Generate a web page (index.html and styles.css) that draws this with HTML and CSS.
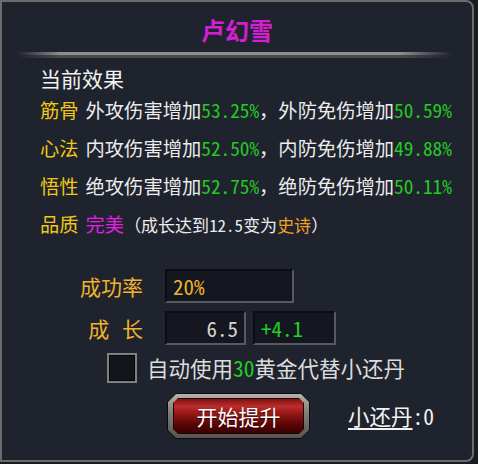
FILE: index.html
```html
<!DOCTYPE html>
<html lang="zh-CN">
<head>
    <meta charset="UTF-8">
    <meta name="viewport" content="width=device-width, initial-scale=1.0">
    <title>提升</title>
    <link rel="stylesheet" href="styles.css">
</head>
<body>
    <div class="panel">
        <h1 class="title">卢幻雪</h1>
        <div class="sep"></div>

        <div class="effects">
            <div class="head">当前效果</div>
            <div class="row"><span class="lbl">筋骨</span>外攻伤害增加<span class="num">53.25%</span>，外防免伤增加<span class="num">50.59%</span></div>
            <div class="row"><span class="lbl">心法</span>内攻伤害增加<span class="num">52.50%</span>，内防免伤增加<span class="num">49.88%</span></div>
            <div class="row"><span class="lbl">悟性</span>绝攻伤害增加<span class="num">52.75%</span>，绝防免伤增加<span class="num">50.11%</span></div>
            <div class="row"><span class="lbl">品质</span><span class="perfect">完美</span><span class="note">（成长达到<span class="half">12.5</span>变为<span class="epic">史诗</span>）</span></div>
        </div>

        <div class="form">
            <div class="frow">
                <span class="flabel">成功率</span>
                <div class="box rate">20%</div>
            </div>
            <div class="frow">
                <span class="flabel spaced">成 长</span>
                <div class="box cur">6.5</div>
                <div class="box add">+4.1</div>
            </div>
        </div>

        <label class="auto">
            <span class="check"></span>
            <span>自动使用<span class="gold">30</span>黄金代替小还丹</span>
        </label>

        <div class="actions">
            <button type="button" class="start">
                <span class="start-frame"><span class="start-face">开始提升</span></span>
            </button>
            <span class="pill"><u>小还丹</u><span class="half">:0</span></span>
        </div>
    </div>
</body>
</html>
```

FILE: styles.css
```css
/* General */
body {
    margin: 0;
    background-color: #181b22;
    font-family: "Noto Sans CJK SC", "Noto Sans", sans-serif;
    color: #ececec;
}

.panel {
    box-sizing: border-box;
    width: 474px;
    height: 462px;
    background-color: #1f232e;
    border: 2px solid #6c6c6c;
    border-radius: 0 8px 8px 0;
}

/* Title */
.title {
    margin: 13px 0 0 0;
    font-size: 24px;
    line-height: 30px;
    font-weight: bold;
    text-align: center;
    color: #d41ed4;
}

.sep {
    height: 6px;
    margin: 7px 20px 0 15px;
    background:
        linear-gradient(to right, transparent, #8e8e8e 10%, #8e8e8e 88%, transparent) top / 100% 3px no-repeat,
        linear-gradient(to right, transparent, #4a4a4a 10%, #4a4a4a 88%, transparent) bottom / 100% 3px no-repeat;
}

/* Effects list */
.effects {
    margin-top: 7px;
    padding-left: 38px;
}

.head {
    font-size: 21px;
    line-height: 26px;
    color: #f2f2f2;
}

.row {
    font-size: 19.3px;
    line-height: 38px;
    white-space: nowrap;
}

.lbl {
    color: #f0c814;
    margin-right: 7px;
}

.num {
    color: #22cc22;
    font-feature-settings: "hwid";
}

.half {
    font-feature-settings: "hwid";
}

.perfect {
    color: #e020e0;
}

.note {
    font-size: 17px;
}

.epic {
    color: #f0a020;
}

/* Rate / growth */
.form {
    margin-top: 25px;
    display: flex;
    flex-direction: column;
    gap: 8px;
}

.frow {
    display: flex;
    align-items: center;
    gap: 7px;
    padding-left: 38px;
}

.flabel {
    width: 103px;
    margin-right: 15px;
    text-align: right;
    font-size: 21px;
    color: #f0b42c;
    white-space: pre;
}

.spaced {
    word-spacing: 8px;
}

.box {
    box-sizing: border-box;
    height: 34px;
    padding: 0 6px;
    background-color: #14171f;
    border: 2px solid #0b0d12;
    border-right-color: #575a60;
    border-bottom-color: #575a60;
    font-size: 21px;
    line-height: 30px;
    font-feature-settings: "hwid";
}

.rate {
    width: 129px;
    color: #f0b42c;
}

.cur {
    width: 81px;
    text-align: right;
    color: #d2d2d2;
}

.add {
    width: 83px;
    color: #22d022;
}

/* Auto use checkbox */
.auto {
    display: flex;
    align-items: center;
    gap: 10px;
    margin-top: 8px;
    padding-left: 105px;
    font-size: 21.5px;
    line-height: 30px;
    color: #dcdcdc;
}

.check {
    box-sizing: border-box;
    width: 30px;
    height: 30px;
    background-color: #13151c;
    border: 2px solid #808080;
    box-shadow: inset 0 0 0 1px #050608;
}

.gold {
    color: #22cc22;
    font-feature-settings: "hwid";
}

/* Actions */
.actions {
    display: flex;
    align-items: center;
    gap: 38px;
    margin-top: 10px;
    padding-left: 165px;
}

.start {
    width: 143px;
    height: 46px;
    padding: 1px;
    border: none;
    background-color: #0c0c0c;
    cursor: pointer;
    clip-path: polygon(9px 0, calc(100% - 9px) 0, 100% 9px, 100% calc(100% - 9px), calc(100% - 9px) 100%, 9px 100%, 0 calc(100% - 9px), 0 9px);
}

.start-frame {
    display: block;
    height: 100%;
    box-sizing: border-box;
    padding: 4px 5px;
    background: linear-gradient(#b4b2aa, #82817b 40%, #55544f);
    clip-path: polygon(8px 0, calc(100% - 8px) 0, 100% 8px, 100% calc(100% - 8px), calc(100% - 8px) 100%, 8px 100%, 0 calc(100% - 8px), 0 8px);
}

.start-face {
    display: block;
    height: 100%;
    box-sizing: border-box;
    border: 1px solid #1a0606;
    background: linear-gradient(#801212, #bc2c2c 22%, #921616 45%, #5a0404 75%, #3a0202);
    font-family: "Noto Sans CJK SC", sans-serif;
    font-size: 21px;
    line-height: 34px;
    color: #ffffff;
    text-shadow: 0 1px 1px #2a0000;
    clip-path: polygon(5px 0, calc(100% - 5px) 0, 100% 5px, 100% calc(100% - 5px), calc(100% - 5px) 100%, 5px 100%, 0 calc(100% - 5px), 0 5px);
}

.pill {
    font-size: 21.5px;
    line-height: 30px;
    color: #f2f2f2;
}

.pill u {
    text-underline-offset: 3px;
}
```
